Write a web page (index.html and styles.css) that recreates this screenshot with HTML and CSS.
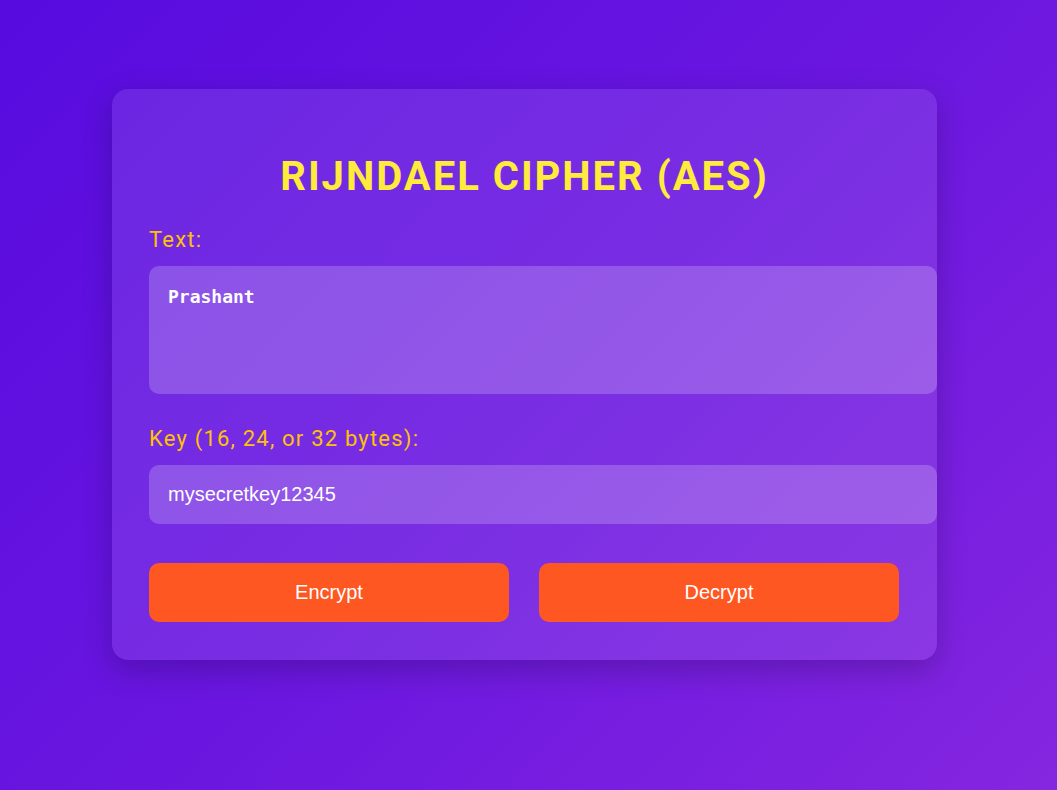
FILE: index.html
```html
<!DOCTYPE html>
<html lang="en">
<head>
<meta charset="utf-8">
<title>Rijndael Cipher (AES)</title>
<link rel="stylesheet" href="styles.css">
</head>
<body>
<main class="page">
  <section class="card">
    <h1 class="title">RIJNDAEL CIPHER (AES)</h1>
    <label class="label" for="text">Text:</label>
    <textarea class="textarea" id="text">Prashant</textarea>
    <label class="label" for="key">Key (16, 24, or 32 bytes):</label>
    <input class="input" id="key" type="text" value="mysecretkey12345">
    <div class="actions">
      <button class="btn">Encrypt</button>
      <button class="btn">Decrypt</button>
    </div>
  </section>
</main>
</body>
</html>
```
FILE: styles.css
```css
html, body {
  margin: 0;
  padding: 0;
  height: 100%;
}
body {
  background: linear-gradient(135deg, #570bdf 0%, #6a16e0 50%, #8526e0 100%);
  font-family: Roboto, "Liberation Sans", sans-serif;
}
.page {
  display: flex;
  justify-content: center;
  padding: 89px 8px 0 0;
}
.card {
  width: 751px;
  padding: 37px 37px 38px;
  border-radius: 16px;
  background: rgba(255, 255, 255, 0.1);
  box-shadow: 0 10px 30px rgba(0, 0, 0, 0.22);
  display: flex;
  flex-direction: column;
  align-items: flex-start;
}
.title {
  align-self: stretch;
  text-align: center;
  margin: 27px 0 27px;
  font-size: 40px;
  font-weight: 700;
  letter-spacing: 2px;
  line-height: 47px;
  color: #ffeb3b;
}
.label {
  display: block;
  font-size: 22px;
  line-height: 26px;
  letter-spacing: 1.2px;
  color: #ffc107;
  margin-bottom: 13px;
}
.textarea {
  display: block;
  width: 100%;
  height: 90px;
  padding: 20px 18px 18px 19px;
  border: none;
  border-radius: 10px;
  background: rgba(255, 255, 255, 0.2);
  color: #fff;
  font-family: "DejaVu Sans Mono", monospace;
  font-weight: 700;
  font-size: 18px;
  line-height: 21px;
  resize: none;
  outline: none;
  margin: 0 0 32px;
}
.input {
  display: block;
  width: 100%;
  height: 23px;
  padding: 18px 18px 18px 19px;
  border: none;
  border-radius: 10px;
  background: rgba(255, 255, 255, 0.2);
  color: #fff;
  font-family: "Liberation Sans", Arial, sans-serif;
  font-size: 20px;
  outline: none;
  margin: 0 0 39px;
}
.actions {
  align-self: stretch;
  display: flex;
  gap: 30px;
  padding-right: 1px;
}
.btn {
  flex: 1;
  height: 59px;
  border: none;
  border-radius: 10px;
  background: #ff5722;
  color: #fff;
  font-family: "Liberation Sans", Arial, sans-serif;
  font-size: 20px;
}
```
